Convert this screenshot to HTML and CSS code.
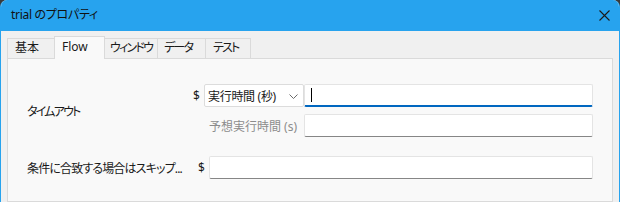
FILE: index.html
```html
<!DOCTYPE html>
<html lang="ja">
<head>
<meta charset="utf-8">
<link rel="stylesheet" href="styles.css">
</head>
<body>
<div class="window">
  <div class="titlebar">
    <span class="title">trial のプロパティ</span>
    <svg class="close" width="11" height="11" viewBox="0 0 11 11"><path d="M0.5 0.5 L10.5 10.5 M10.5 0.5 L0.5 10.5" stroke="#1b1b1b" stroke-width="1.1" fill="none"/></svg>
  </div>
  <div class="content">
    <div class="tabs">
      <div class="tab tab-kihon">基本</div>
      <div class="tab tab-flow active">Flow</div>
      <div class="tab tab-window kana">ウィンドウ</div>
      <div class="tab tab-data kana">データ</div>
      <div class="tab tab-test kana">テスト</div>
    </div>
    <div class="panel">
      <div class="field field-timeout">
        <div class="field-label kana">タイムアウト</div>
        <div class="field-grid">
          <span class="dollar">$</span>
          <div class="select">
            <span>実行時間 (秒)</span>
            <svg class="chev" width="9" height="5" viewBox="0 0 9 5"><path d="M0.5 0.5 L4.5 4.5 L8.5 0.5" stroke="#6b6b6b" stroke-width="1" fill="none"/></svg>
          </div>
          <div class="input input-focus"><span class="caret"></span></div>
          <div class="hint">予想実行時間 (s)</div>
          <div class="input"></div>
        </div>
      </div>
      <div class="field field-skip">
        <div class="field-label">条件に合致する場合はスキップ...</div>
        <span class="dollar">$</span>
        <div class="input input-wide"></div>
      </div>
    </div>
  </div>
</div>
</body>
</html>
```
FILE: styles.css
```css
* { box-sizing: border-box; }
html, body { margin: 0; padding: 0; background: #3a3a3a; }
body {
  font-family: "Noto Sans", "Noto Sans CJK JP", sans-serif;
  font-size: 12px;
  color: #1a1a1a;
  font-feature-settings: "palt";
}
.kana { letter-spacing: -1.8px; }
.window {
  width: 620px;
  height: 202px;
  background: #f0f0f0;
  border-left: 1px solid #27a3ee;
  border-right: 1px solid #27a3ee;
  border-top-left-radius: 7px;
  border-top-right-radius: 7px;
  overflow: hidden;
  display: flex;
  flex-direction: column;
}
.titlebar {
  height: 31px;
  flex: none;
  background: #27a3ee;
  display: flex;
  align-items: center;
  justify-content: space-between;
  padding: 0 9px 1px 10px;
  line-height: 16px;
}
.title { color: #111; letter-spacing: -0.3px; }
.content {
  padding: 5px 6px 0 6px;
  flex: 1;
  display: flex;
  flex-direction: column;
}
.tabs {
  display: flex;
  align-items: flex-end;
  height: 22px;
  position: relative;
  z-index: 1;
}
.tab {
  height: 20px;
  border: 1px solid #dadada;
  border-bottom: none;
  border-right: none;
  background: #f0f0f0;
  line-height: 18px;
  padding-left: 7px;
  white-space: nowrap;
  overflow: hidden;
}
.tab-kihon { width: 47px; }
.tab-flow { width: 51px; padding-left: 7px; }
.tab-window { width: 52px; padding-left: 5px; border-left: none; }
.tab-data { width: 48px; padding-left: 6px; }
.tab-test { width: 46px; padding-left: 7px; border-right: 1px solid #dadada; }
.tab.active {
  height: 23px;
  background: #f9f9f9;
  border-right: 1px solid #dadada;
  margin-bottom: -1px;
  line-height: 19px;
}
.panel {
  flex: 1;
  background: #f9f9f9;
  border: 1px solid #dadada;
  padding: 25px 19px 0 19px;
}
.field {
  display: flex;
  align-items: center;
}
.field-label { flex: none; white-space: nowrap; overflow: hidden; }
.field-timeout .field-label { width: 166px; padding-top: 1px; }
.field-skip { margin-top: 19px; }
.field-skip .field-label { width: 171px; letter-spacing: -0.85px; }
.field-grid {
  flex: 1;
  display: grid;
  grid-template-columns: 11px 100px 1fr;
  row-gap: 7px;
  align-items: center;
}
.dollar { width: 11px; flex: none; }
.select {
  height: 23px;
  background: #fff;
  border: 1px solid #dcdcdc;
  border-radius: 2px;
  display: flex;
  align-items: center;
  justify-content: space-between;
  padding: 0 5px 0 3px;
  letter-spacing: -0.3px;
}
.chev { margin-top: 1px; }
.input {
  height: 23px;
  background: #fff;
  border: 1px solid #e4e4e4;
  border-bottom: 1px solid #868686;
  border-radius: 2px;
  display: flex;
  align-items: center;
}
.input-focus {
  border-bottom: 2px solid #0067c0;
  padding-left: 6px;
}
.caret {
  width: 1px;
  height: 14px;
  background: #000;
  margin-bottom: 1px;
}
.hint {
  grid-column: 1 / 3;
  text-align: right;
  padding-right: 7px;
  color: #8c8c8c;
}
.input-wide { flex: 1; }
```
